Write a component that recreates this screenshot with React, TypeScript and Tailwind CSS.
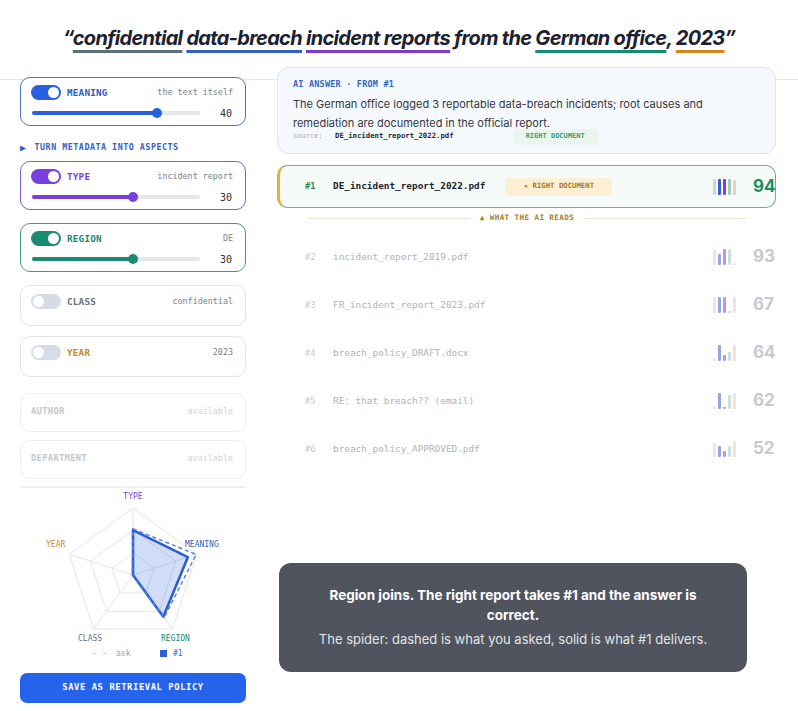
import React from "react";

type Row = { rank: string; name: string; bars: number[]; score: number };

const rows: Row[] = [
  { rank: "#2", name: "incident_report_2019.pdf", bars: [16, 11, 16, 16, 2], score: 93 },
  { rank: "#3", name: "FR_incident_report_2023.pdf", bars: [16, 16, 16, 2, 16], score: 67 },
  { rank: "#4", name: "breach_policy_DRAFT.docx", bars: [3, 16, 6, 9, 16], score: 64 },
  { rank: "#5", name: "RE: that breach?? (email)", bars: [3, 16, 2, 14, 16], score: 62 },
  { rank: "#6", name: "breach_policy_APPROVED.pdf", bars: [14, 11, 6, 11, 16], score: 52 },
];

const barColors = ["bg-[#cdd6e2]", "bg-[#3b5fd3]", "bg-[#7a45d8]", "bg-[#a3c9c0]", "bg-[#e4d3b8]"];

function Bars({ h, faded }: { h: number[]; faded?: boolean }) {
  return (
    <div className={`flex h-[16px] items-end gap-[2px] ${faded ? "opacity-55" : ""}`}>
      {h.map((v, i) => (
        <span key={i} className={`w-[3px] rounded-[1px] ${barColors[i]}`} style={{ height: v }} />
      ))}
    </div>
  );
}

function U({ c, children }: { c: string; children: React.ReactNode }) {
  return (
    <span className={`underline decoration-[3px] underline-offset-[5px] [text-decoration-skip-ink:none] ${c}`}>
      {children}
    </span>
  );
}

function Toggle({ on, bg }: { on: boolean; bg: string }) {
  return (
    <span
      className={`flex h-[15px] w-[30px] shrink-0 items-center rounded-full px-[2px] ${bg} ${
        on ? "justify-end" : "justify-start"
      }`}
    >
      <span className="h-[11px] w-[11px] rounded-full bg-white" />
    </span>
  );
}

function ActiveCard(props: {
  label: string;
  hint: string;
  value: number;
  fill: number;
  border: string;
  bg: string;
  text: string;
  className?: string;
}) {
  return (
    <div className={`h-[49px] rounded-[10px] border-[1.5px] bg-white pl-[10px] pr-[12px] pt-[7px] ${props.border} ${props.className ?? ""}`}>
      <div className="flex h-[15px] items-center">
        <Toggle on bg={props.bg} />
        <span className={`ml-[6px] text-[9.3px] font-bold tracking-[0.2px] ${props.text}`}>{props.label}</span>
        <span className="ml-auto text-[8.4px] text-[#7d828a]">{props.hint}</span>
      </div>
      <div className="mt-[8px] flex h-[10px] items-center">
        <div className="relative ml-[1px] h-[4px] w-[168px] rounded-full bg-[#e4e7eb]">
          <div className={`absolute left-0 top-0 h-full rounded-full ${props.bg}`} style={{ width: props.fill }} />
          <div
            className={`absolute top-1/2 h-[10px] w-[10px] -translate-x-1/2 -translate-y-1/2 rounded-full ${props.bg}`}
            style={{ left: props.fill }}
          />
        </div>
        <span className="ml-auto pr-[1px] text-[10px] text-[#2a2f3a]">{props.value}</span>
      </div>
    </div>
  );
}

function OffCard({ label, hint, text, className }: { label: string; hint: string; text: string; className: string }) {
  return (
    <div className={`h-[41px] rounded-[10px] border border-[#e1e5ea] bg-white pl-[10px] pr-[12px] pt-[8px] ${className}`}>
      <div className="flex h-[15px] items-center">
        <Toggle on={false} bg="bg-[#d6dce5]" />
        <span className={`ml-[6px] text-[9.3px] font-bold tracking-[0.2px] ${text}`}>{label}</span>
        <span className="ml-auto text-[8.4px] text-[#7d828a]">{hint}</span>
      </div>
    </div>
  );
}

function GhostCard({ label, className }: { label: string; className: string }) {
  return (
    <div className={`flex h-[39px] items-start rounded-[10px] border border-[#eceef1] bg-white pl-[10px] pr-[12px] pt-[11px] ${className}`}>
      <span className="text-[8.8px] font-semibold tracking-[0.3px] text-[#c3c7cd]">{label}</span>
      <span className="ml-auto text-[8.4px] text-[#d0d4d9]">available</span>
    </div>
  );
}

const CX = 113;
const CY = 87;
const R = 67;
const ANG = [-90, -18, 54, 126, 198];

function pt(i: number, r: number) {
  const a = (ANG[i] * Math.PI) / 180;
  return [CX + R * r * Math.cos(a), CY + R * r * Math.sin(a)];
}

function poly(vals: number[]) {
  return vals.map((v, i) => pt(i, v).map((n) => n.toFixed(1)).join(",")).join(" ");
}

function Radar() {
  const rings = [0.33, 0.67, 1];
  return (
    <svg width="226" height="180" className="block" fontFamily="'DejaVu Sans Mono', monospace">
      {rings.map((r) => (
        <polygon key={r} points={poly([r, r, r, r, r])} fill="none" stroke="#e3e5e9" strokeWidth="1" />
      ))}
      {ANG.map((_, i) => {
        const [x, y] = pt(i, 1);
        return <line key={i} x1={CX} y1={CY} x2={x} y2={y} stroke="#e3e5e9" strokeWidth="1" />;
      })}
      <polygon
        points={poly([0.67, 0.86, 0.77, 0, 0])}
        fill="#3466dc"
        fillOpacity="0.22"
        stroke="#2b5fd6"
        strokeWidth="2.6"
        strokeLinejoin="round"
      />
      <polygon
        points={poly([0.69, 0.99, 0.79, 0.01, 0.01])}
        fill="none"
        stroke="#5c80d8"
        strokeWidth="1.5"
        strokeDasharray="4 3"
      />
      <text x="113" y="11" textAnchor="middle" fontSize="8" fill="#8046d8">TYPE</text>
      <text x="165" y="59" fontSize="8" fill="#2f5fc0">MEANING</text>
      <text x="26" y="59" fontSize="8" fill="#c98a1f">YEAR</text>
      <text x="58" y="153" fontSize="8" fill="#6b7280">CLASS</text>
      <text x="141" y="153" fontSize="8" fill="#1a8a72">REGION</text>
      <text x="72" y="168" fontSize="8" fill="#9ca3af">- -</text>
      <text x="96" y="168" fontSize="8" fill="#9ca3af">ask</text>
      <rect x="140" y="162" width="7" height="7" fill="#2b5fd6" />
      <text x="153" y="168" fontSize="8" fill="#2f5fc0">#1</text>
    </svg>
  );
}

export default function App() {
  return (
    <div className="min-h-screen bg-white font-['DejaVu_Sans_Mono',monospace] text-[#1f2430]">
      <header className="flex h-[80px] justify-center border-b border-[#e6e8ec] pt-[24px]">
        <h1 className="font-['Inter',sans-serif] text-[20px] font-bold italic leading-[28px] tracking-[-0.7px] text-[#1b2130]">
          “<U c="decoration-[#5d6f78]">confidential</U> <U c="decoration-[#2f5fc7]">data-breach</U>{" "}
          <U c="decoration-[#7b3bd2]">incident reports</U> from the <U c="decoration-[#178a73]">German office</U>,{" "}
          <U c="decoration-[#d4871a]">2023</U>”
        </h1>
      </header>

      <main className="relative -mt-[13px] flex">
        <aside className="ml-[20px] w-[226px] pt-[10px]">
          <ActiveCard
            label="MEANING"
            hint="the text itself"
            value={40}
            fill={125}
            border="border-[#4d75c0]"
            bg="bg-[#2a60e0]"
            text="text-[#2f5fc0]"
          />
          <div className="mt-[15px] flex h-[12px] items-center text-[8.4px] font-bold tracking-[0.5px] text-[#2f63c8]">
            <span className="text-[10px]">▶</span>
            <span className="ml-[8px]">TURN METADATA INTO ASPECTS</span>
          </div>
          <ActiveCard
            className="mt-[8px]"
            label="TYPE"
            hint="incident report"
            value={30}
            fill={101}
            border="border-[#8a5bd0]"
            bg="bg-[#7a3fe2]"
            text="text-[#7a3fe2]"
          />
          <ActiveCard
            className="mt-[13px]"
            label="REGION"
            hint="DE"
            value={30}
            fill={101}
            border="border-[#3f9a86]"
            bg="bg-[#1b8a73]"
            text="text-[#1b8a73]"
          />
          <OffCard className="mt-[13px]" label="CLASS" hint="confidential" text="text-[#6b7280]" />
          <OffCard className="mt-[10px]" label="YEAR" hint="2023" text="text-[#cc8a1c]" />
          <GhostCard className="mt-[16px]" label="AUTHOR" />
          <GhostCard className="mt-[8px]" label="DEPARTMENT" />
          <div className="mt-[7px] h-[2px] bg-[#eef0f2]" />
          <Radar />
          <button className="mt-[5px] flex h-[30px] w-full items-center justify-center rounded-[7px] bg-[#2563eb] text-[8.8px] font-bold tracking-[0.6px] text-white">
            SAVE AS RETRIEVAL POLICY
          </button>
        </aside>

        <section className="ml-[31px] w-[499px]">
          <div className="rounded-[12px] border border-[#dde4ee] bg-[#f5f8fc] pb-[9px] pl-[15px] pt-[11px]">
            <div className="text-[8.5px] font-bold leading-[10px] tracking-[0.2px] text-[#3566c5]">AI ANSWER · FROM #1</div>
            <p className="mt-[6px] w-[420px] font-['Inter',sans-serif] text-[11px] leading-[19px] text-[#333945]">
              The German office logged 3 reportable data-breach incidents; root causes and remediation are documented in the official report.
            </p>
            <div className="relative -mt-[4px] flex h-[15px] items-center">
              <span className="w-[42px] text-[7px] text-[#a5abb3]">source:</span>
              <span className="text-[7.3px] font-bold text-[#262b36]">DE_incident_report_2022.pdf</span>
              <span className="ml-[60px] flex h-[16px] w-[85px] items-center rounded-[3px] bg-[#e8f6ee] pl-[12px] text-[7px] font-bold text-[#3f9b70]">
                RIGHT DOCUMENT
              </span>
            </div>
          </div>

          <div className="mt-[11px] flex h-[43px] items-center rounded-[10px] border border-l-[3px] border-[#69ad9e] border-l-[#e3b23c] bg-[#f6fbfa] pl-[25px] pr-[2px]">
            <span className="w-[28px] text-[8.6px] font-bold text-[#2b8a5b]">#1</span>
            <span className="text-[9.4px] font-bold text-[#1d2330]">DE_incident_report_2022.pdf</span>
            <span className="ml-[20px] flex h-[18px] w-[107px] items-center justify-center rounded-[3px] bg-[#fcefd3] text-[7.3px] font-bold text-[#a87a1c]">
              ★ RIGHT DOCUMENT
            </span>
            <div className="ml-auto">
              <Bars h={[16, 16, 16, 16, 15]} />
            </div>
            <span className="ml-[17px] w-[20px] text-right font-['Inter',sans-serif] text-[17px] font-bold text-[#1c8c5e]">94</span>
          </div>

          <div className="flex h-[20px] items-center pl-[30px] pr-[29px]">
            <div className="h-px flex-1 bg-[#efe6cf]" />
            <span className="px-[10px] text-[7.6px] font-bold tracking-[0.4px] text-[#a9801f]">▲ WHAT THE AI READS</span>
            <div className="h-px flex-1 bg-[#efe6cf]" />
          </div>

          <div className="mt-[5px]">
            {rows.map((r) => (
              <div key={r.rank} className="flex h-[48px] items-center pl-[28px] pr-[3px]">
                <span className="w-[28px] text-[8.6px] text-[#c6cacf]">{r.rank}</span>
                <span className="text-[9.4px] text-[#aeb3ba]">{r.name}</span>
                <div className="ml-auto">
                  <Bars h={r.bars} faded />
                </div>
                <span className="ml-[17px] w-[20px] text-right font-['Inter',sans-serif] text-[17px] font-bold text-[#c6cad0]">
                  {r.score}
                </span>
              </div>
            ))}
          </div>

          <div className="ml-[2px] mt-[90px] w-[468px] rounded-[12px] bg-[#50545e] px-[36px] pb-[23px] pt-[22px] text-center font-['Inter',sans-serif]">
            <p className="text-[13.5px] font-bold leading-[20px] text-white">
              Region joins. The right report takes #1 and the answer is correct.
            </p>
            <p className="mt-[4px] text-[13px] leading-[20px] text-[#e2e4e8]">
              The spider: dashed is what you asked, solid is what #1 delivers.
            </p>
          </div>
        </section>
      </main>
    </div>
  );
}
